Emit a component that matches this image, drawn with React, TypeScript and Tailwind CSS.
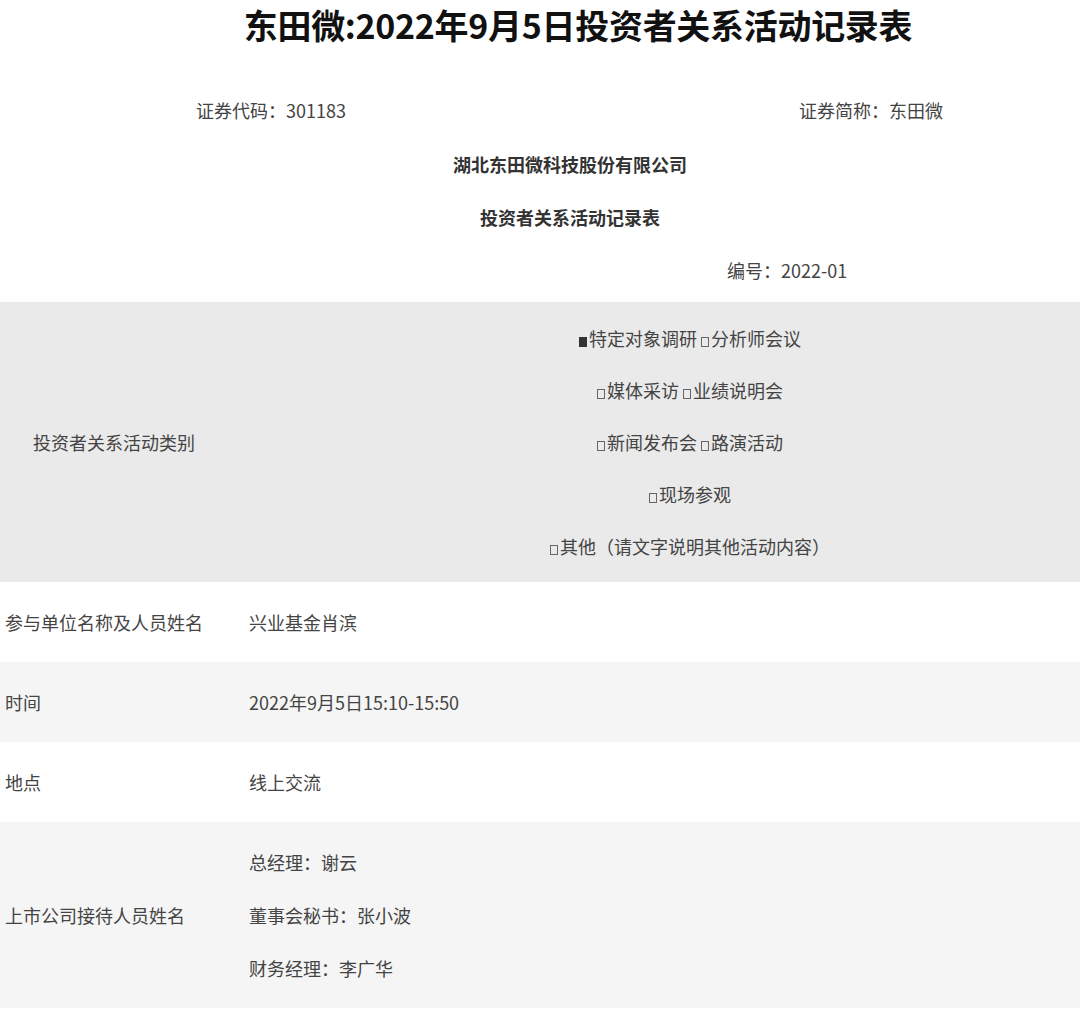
import React from "react";

const font = { fontFamily: '"Noto Sans CJK SC", "Noto Sans", sans-serif' };

function Box({ filled }: { filled?: boolean }) {
  return filled ? (
    <span className="inline-block w-[8px] h-[10px] bg-[#333] mr-[2px] align-[-1px]" />
  ) : (
    <span className="inline-block w-[8px] h-[10px] border border-[#666] mr-[2px] align-[-1px]" />
  );
}

export default function App() {
  return (
    <div className="w-[1080px] h-[1013px] bg-white text-[#444] overflow-hidden" style={font}>
      <div className="h-[52px] flex items-center justify-center pl-[76px] pb-[2px]">
        <h1 className="text-[34px] font-bold text-[#111] leading-none tracking-[-0.3px]">东田微:2022年9月5日投资者关系活动记录表</h1>
      </div>
      <div className="h-[86px] flex items-end justify-between pl-[196px] pr-[137px] pb-[15px] text-[18px] leading-[26px]">
        <span>证券代码：301183</span>
        <span>证券简称：东田微</span>
      </div>
      <div className="h-[53px] flex items-center justify-center pl-[60px] text-[18px] font-bold text-[#333]">湖北东田微科技股份有限公司</div>
      <div className="h-[53px] flex items-center justify-center pl-[60px] text-[18px] font-bold text-[#333]">投资者关系活动记录表</div>
      <div className="h-[58px] flex items-center pl-[727px] pb-[6px] text-[18px]">编号：2022-01</div>

      <div className="flex bg-[#eaeaea] h-[280px] text-[18px]">
        <div className="w-[300px] flex items-center pl-[33px]">投资者关系活动类别</div>
        <div className="flex-1 flex flex-col items-center justify-center leading-[52px] py-[10px]">
          <div><Box filled />特定对象调研 <Box />分析师会议</div>
          <div><Box />媒体采访 <Box />业绩说明会</div>
          <div><Box />新闻发布会 <Box />路演活动</div>
          <div><Box />现场参观</div>
          <div><Box />其他（请文字说明其他活动内容）</div>
        </div>
      </div>

      <div className="flex h-[80px] items-center bg-white text-[18px]">
        <div className="w-[249px] pl-[5px]">参与单位名称及人员姓名</div>
        <div>兴业基金肖滨</div>
      </div>
      <div className="flex h-[80px] items-center bg-[#f5f5f5] text-[18px]">
        <div className="w-[249px] pl-[5px]">时间</div>
        <div>2022年9月5日15:10-15:50</div>
      </div>
      <div className="flex h-[80px] items-center bg-white text-[18px]">
        <div className="w-[249px] pl-[5px]">地点</div>
        <div>线上交流</div>
      </div>
      <div className="flex h-[186px] items-center bg-[#f5f5f5] text-[18px]">
        <div className="w-[249px] pl-[5px]">上市公司接待人员姓名</div>
        <div className="flex flex-col leading-[53px]">
          <div>总经理：谢云</div>
          <div>董事会秘书：张小波</div>
          <div>财务经理：李广华</div>
        </div>
      </div>
    </div>
  );
}
